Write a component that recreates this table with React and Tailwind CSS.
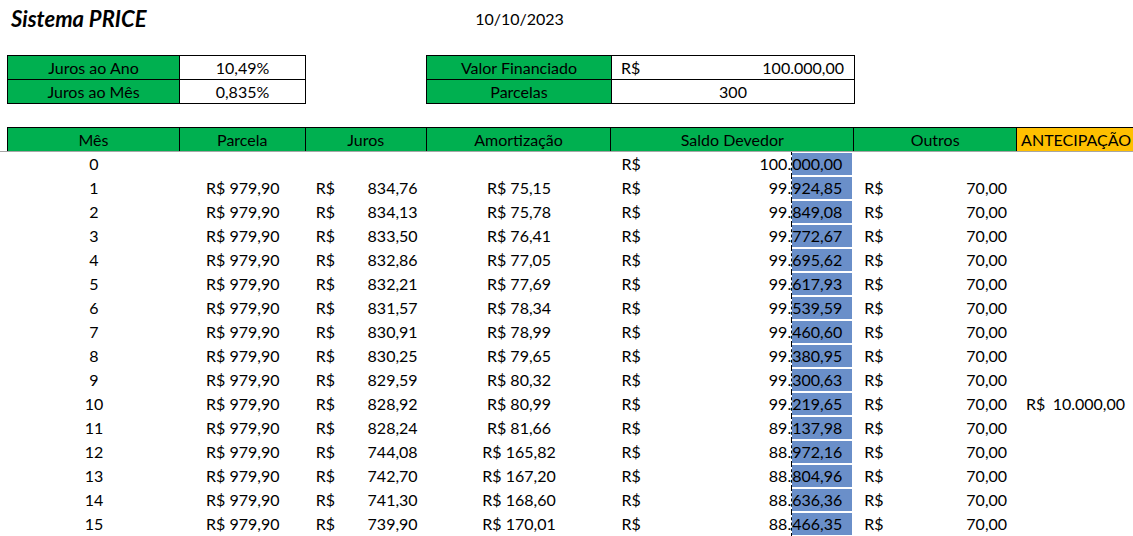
const rows = [
  { m: '0', parcela: '', juros: '', amort: '', pre: '100.', suf: '000,00', outros: '', antecip: '' },
  { m: '1', parcela: 'R$ 979,90', juros: '834,76', amort: 'R$ 75,15', pre: '99.', suf: '924,85', outros: '70,00', antecip: '' },
  { m: '2', parcela: 'R$ 979,90', juros: '834,13', amort: 'R$ 75,78', pre: '99.', suf: '849,08', outros: '70,00', antecip: '' },
  { m: '3', parcela: 'R$ 979,90', juros: '833,50', amort: 'R$ 76,41', pre: '99.', suf: '772,67', outros: '70,00', antecip: '' },
  { m: '4', parcela: 'R$ 979,90', juros: '832,86', amort: 'R$ 77,05', pre: '99.', suf: '695,62', outros: '70,00', antecip: '' },
  { m: '5', parcela: 'R$ 979,90', juros: '832,21', amort: 'R$ 77,69', pre: '99.', suf: '617,93', outros: '70,00', antecip: '' },
  { m: '6', parcela: 'R$ 979,90', juros: '831,57', amort: 'R$ 78,34', pre: '99.', suf: '539,59', outros: '70,00', antecip: '' },
  { m: '7', parcela: 'R$ 979,90', juros: '830,91', amort: 'R$ 78,99', pre: '99.', suf: '460,60', outros: '70,00', antecip: '' },
  { m: '8', parcela: 'R$ 979,90', juros: '830,25', amort: 'R$ 79,65', pre: '99.', suf: '380,95', outros: '70,00', antecip: '' },
  { m: '9', parcela: 'R$ 979,90', juros: '829,59', amort: 'R$ 80,32', pre: '99.', suf: '300,63', outros: '70,00', antecip: '' },
  { m: '10', parcela: 'R$ 979,90', juros: '828,92', amort: 'R$ 80,99', pre: '99.', suf: '219,65', outros: '70,00', antecip: '10.000,00' },
  { m: '11', parcela: 'R$ 979,90', juros: '828,24', amort: 'R$ 81,66', pre: '89.', suf: '137,98', outros: '70,00', antecip: '' },
  { m: '12', parcela: 'R$ 979,90', juros: '744,08', amort: 'R$ 165,82', pre: '88.', suf: '972,16', outros: '70,00', antecip: '' },
  { m: '13', parcela: 'R$ 979,90', juros: '742,70', amort: 'R$ 167,20', pre: '88.', suf: '804,96', outros: '70,00', antecip: '' },
  { m: '14', parcela: 'R$ 979,90', juros: '741,30', amort: 'R$ 168,60', pre: '88.', suf: '636,36', outros: '70,00', antecip: '' },
  { m: '15', parcela: 'R$ 979,90', juros: '739,90', amort: 'R$ 170,01', pre: '88.', suf: '466,35', outros: '70,00', antecip: '' },
];

const headers = [
  { label: 'Mês', cls: 'w-[172px]' },
  { label: 'Parcela', cls: 'w-[126px]' },
  { label: 'Juros', cls: 'w-[121px]' },
  { label: 'Amortização', cls: 'w-[185px]' },
  { label: 'Saldo Devedor', cls: 'w-[243px]' },
  { label: 'Outros', cls: 'w-[163px]' },
];

function InfoBox({ items, labelW, valueW }) {
  return (
    <div className="flex flex-col border-l border-t border-black">
      {items.map((it) => (
        <div key={it.label} className="flex h-[24px]">
          <div className={`${labelW} flex items-center justify-center border-r border-b border-black bg-[#00b050]`}>
            {it.label}
          </div>
          <div className={`${valueW} flex items-center border-r border-b border-black bg-white`}>{it.value}</div>
        </div>
      ))}
    </div>
  );
}

export default function App() {
  return (
    <div className="w-[1133px] h-[536px] overflow-hidden bg-white text-black text-[16px] leading-none font-['Lato','Liberation_Sans',sans-serif] tabular-nums">
      {/* title line */}
      <div className="h-[55px]">
        <div className="flex h-[37px] items-center">
          <div className="w-[427px] pl-[11px] text-[22px] font-bold italic">Sistema PRICE</div>
          <div className="w-[185px] text-center">10/10/2023</div>
        </div>
      </div>

      {/* summary boxes */}
      <div className="flex ml-[7px] gap-[120px]">
        <InfoBox
          labelW="w-[172px]"
          valueW="w-[126px]"
          items={[
            { label: 'Juros ao Ano', value: <span className="w-full text-center">10,49%</span> },
            { label: 'Juros ao Mês', value: <span className="w-full text-center">0,835%</span> },
          ]}
        />
        <InfoBox
          labelW="w-[185px]"
          valueW="w-[243px]"
          items={[
            {
              label: 'Valor Financiado',
              value: (
                <span className="flex w-full justify-between pl-[9px] pr-[10px]">
                  <span>R$</span>
                  <span>100.000,00</span>
                </span>
              ),
            },
            { label: 'Parcelas', value: <span className="w-full text-center">300</span> },
          ]}
        />
      </div>

      <div className="h-[23px]" />

      {/* header */}
      <div className="flex ml-[7px] h-[24px] border-l border-t border-black">
        {headers.map((h) => (
          <div key={h.label} className={`${h.cls} flex items-center justify-center border-r border-black bg-[#00b050]`}>
            {h.label}
          </div>
        ))}
        <div className="w-[116px] flex items-center pl-[4px] bg-[#ffc000] whitespace-nowrap overflow-hidden">ANTECIPAÇÃO</div>
      </div>
      <div className="h-px w-full bg-[#a6a6a6]" />

      {/* body */}
      <div className="ml-[8px] flex flex-col">
        {rows.map((r) => (
          <div key={r.m} className="flex h-[24px]">
            <div className="w-[172px] flex items-center justify-center">{r.m}</div>
            <div className="w-[126px] flex items-center justify-center">{r.parcela}</div>
            <div className="w-[121px] flex items-center justify-between pl-[10px] pr-[9px]">
              {r.juros && <span>R$</span>}
              {r.juros && <span>{r.juros}</span>}
            </div>
            <div className="w-[185px] flex items-center justify-center">{r.amort}</div>
            <div className="w-[243px] flex items-stretch justify-between pl-[10px] pr-[2px]">
              <span className="flex items-center">R$</span>
              <span className="flex items-stretch">
                <span className="flex items-center">{r.pre}</span>
                <span className="flex items-center border-l border-dashed border-black">
                  <span className="flex h-[22px] items-center bg-[#6a8fc9] pr-[10px]">{r.suf}</span>
                </span>
              </span>
            </div>
            <div className="w-[163px] flex items-center justify-between pl-[10px] pr-[10px]">
              {r.outros && <span>R$</span>}
              {r.outros && <span>{r.outros}</span>}
            </div>
            <div className="w-[116px] flex items-center justify-between pl-[9px] pr-[8px] whitespace-nowrap">
              {r.antecip && <span>R$</span>}
              {r.antecip && <span>{r.antecip}</span>}
            </div>
          </div>
        ))}
      </div>
    </div>
  );
}
